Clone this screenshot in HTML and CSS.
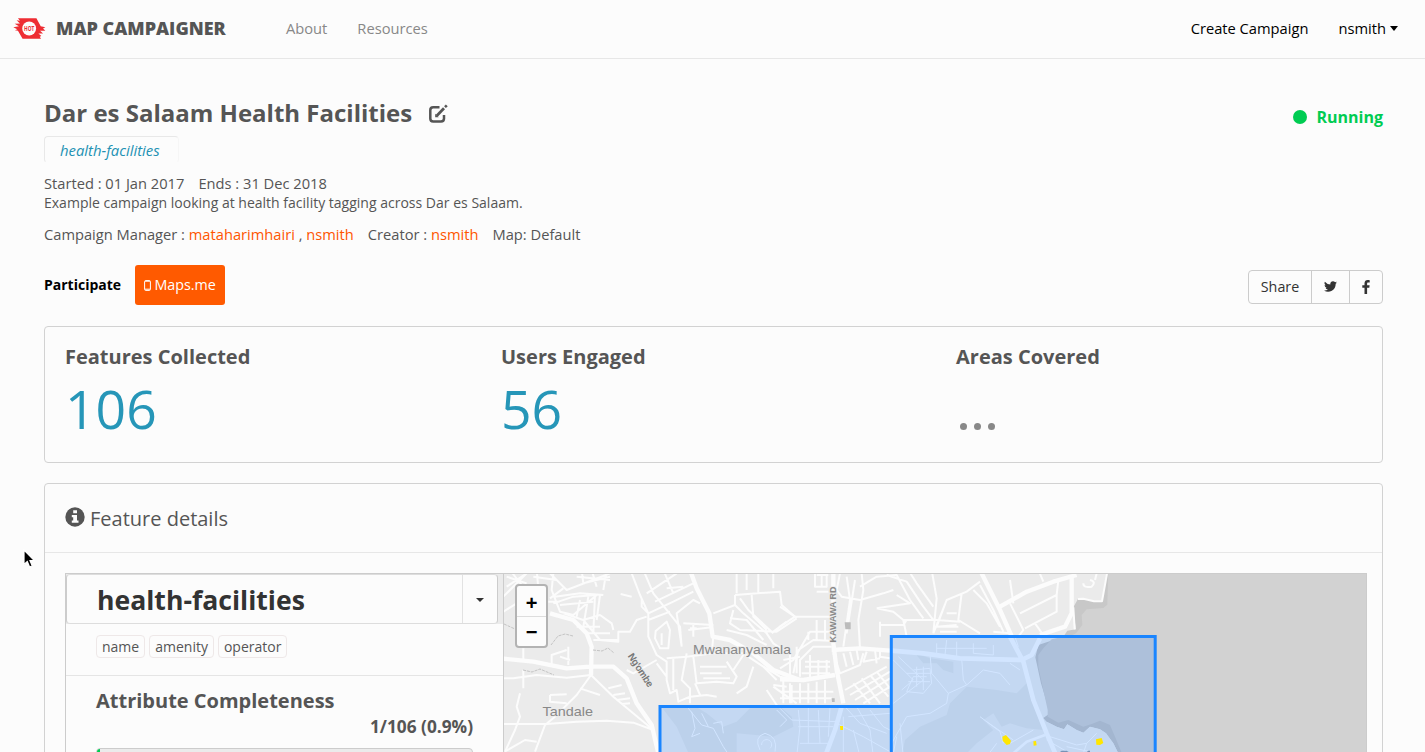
FILE: index.html
```html
<!DOCTYPE html>
<html lang="en">
<head>
<meta charset="utf-8">
<title>Map Campaigner</title>
<link rel="stylesheet" href="styles.css">
</head>
<body>
<header class="navbar">
  <svg class="logo" viewBox="0 0 100 62" width="33" height="21" preserveAspectRatio="none"><path fill="#ee2d33" d="M15 1H71L84 24 98 27 91 31 98 38 82 38 91 46 77 46 86 53 81 55 85 61H29L15 38 6 36 13 33 1 27 18 24 5 17 21 16 11 7 21 8Z"/><circle cx="49" cy="31" r="21" fill="#fcfcfc"/><text x="49" y="38" class="logo-text" text-anchor="middle" textLength="31" lengthAdjust="spacingAndGlyphs">HOT</text></svg>
  <span class="brand">MAP CAMPAIGNER</span>
  <nav class="links"><a>About</a><a>Resources</a></nav>
  <nav class="account"><a>Create Campaign</a><a class="user">nsmith<i class="caret"></i></a></nav>
</header>
<main class="page">
  <div class="title-row">
    <h1>Dar es Salaam Health Facilities</h1>
    <svg class="edit" viewBox="0 0 20 20" width="20" height="20" fill="none" stroke="#555"><path stroke-width="2.5" d="M11.5 3.3H5.2Q2.3 3.3 2.3 6.2V14.5Q2.3 17.5 5.2 17.5H13Q16 17.5 16 14.5V11"/><path stroke-width="2.7" d="M8.8 11.8 16 4.2"/><path stroke-width="2.6" d="M17 3.2 18.8 1.4"/><path fill="#555" stroke="none" d="M7.2 13.2V9.8L10.7 13.2Z"/></svg>
    <div class="status"><i class="dot"></i>Running</div>
  </div>
  <div class="type-tag">health-facilities</div>
  <p class="meta dates"><span>Started : 01 Jan 2017</span><span>Ends : 31 Dec 2018</span></p>
  <p class="meta desc">Example campaign looking at health facility tagging across Dar es Salaam.</p>
  <p class="meta people"><span>Campaign Manager : <a>mataharimhairi</a> , <a>nsmith</a></span><span>Creator : <a>nsmith</a></span><span>Map: Default</span></p>
  <div class="actions">
    <b class="participate">Participate</b>
    <a class="mapsme"><svg viewBox="0 0 7 11" width="7" height="11"><rect x=".6" y=".6" width="5.8" height="9.8" rx="1" fill="none" stroke="#fff"/><path d="M1 1.2H6M1 9.2H6" stroke="#fff"/></svg>Maps.me</a>
    <div class="share">
      <span class="share-label">Share</span>
      <span class="share-tw"><svg viewBox="0 0 24 24" width="13" height="13"><path fill="#333" d="M24 4.6a10 10 0 0 1-2.8.8 5 5 0 0 0 2.1-2.7 10 10 0 0 1-3.1 1.2 4.9 4.9 0 0 0-8.4 4.5A14 14 0 0 1 1.700 3.200a4.900 4.900 0 0 0 1.500 6.500 5 5 0 0 1-2.200-.6 4.900 4.900 0 0 0 3.900 4.900 5 5 0 0 1-2.200.1 4.900 4.900 0 0 0 4.600 3.400A9.900 9.900 0 0 1 0 19.500 14 14 0 0 0 21.500 7.100 10 10 0 0 0 24 4.600Z"/></svg></span>
      <span class="share-fb"><svg viewBox="0 0 8 14" width="8" height="14"><path fill="#333" d="M7.700.2V2.500H6.300C5.300 2.500 5.100 3 5.100 3.700V5.200H7.600L7.300 7.700H5.100V14H2.500V7.700H.3V5.200H2.500V3.300C2.500 1.200 3.800 0 5.700 0 6.700 0 7.400.1 7.700.2Z"/></svg></span>
    </div>
  </div>
  <section class="card stats">
    <div class="stat"><h2>Features Collected</h2><div class="num">106</div></div>
    <div class="stat"><h2>Users Engaged</h2><div class="num">56</div></div>
    <div class="stat"><h2>Areas Covered</h2><div class="dots"><i></i><i></i><i></i></div></div>
  </section>
  <section class="card details">
    <div class="card-head"><svg viewBox="0 0 20 20" width="20" height="20"><circle cx="10" cy="10" r="9.700" fill="#555"/><path fill="#fcfcfc" d="M8.200 3.200H12V6.200H8.200ZM6.800 8H12V13.400H13.500V15.800H6.800V13.400H8.200V10.300H6.800Z"/></svg><span>Feature details</span></div>
    <div class="explorer">
      <div class="side">
        <div class="select-row"><div class="select"><span class="value">health-facilities</span><span class="toggle"><i class="caret small"></i></span></div></div>
        <div class="attrs"><span>name</span><span>amenity</span><span>operator</span></div>
        <div class="complete"><h2>Attribute Completeness</h2><div class="pct">1/106 (0.9%)</div><div class="bar"><i style="width:0.9%"></i></div></div>
      </div>
      <div class="map">
        <svg class="tiles" viewBox="504 574 862 179" width="862" height="179">
          <defs>
            <clipPath id="areas"><path d="M660 706.500H891.300V636.500H1155V780H660Z"/></clipPath>
            <path id="shore" d="M983 0 974 50 966 94 942 94 910 86 894 87 880 112 884 150 888 178 862 182 850 200 775 225 766 262 783 340 810 430 790 444 800 455 830 470 852 478 862 463 890 480 910 488 930 470 960 478 978 490 1000 520 1020 560H1920V0Z"/>
          </defs>
          <rect x="504" y="573" width="863" height="190" fill="#ebebeb"/>
          <g transform="translate(780 570) scale(.33333)"><use href="#shore" fill="#c8c8c8"/><path fill="#d2d2d2" d="M985 0 982 104 970 114 920 118 905 135 907 165 888 190 850 208V560H1920V0Z"/></g>
          <g class="roads" transform="translate(500 570) scale(.33333)">
            <path class="wide" d="M570 0 590 55 628 130 638 200 690 210 760 250 820 300 900 330M0 265 100 275 200 295 270 290 340 290 380 325 410 400 455 465 475 550M150 130 220 150 260 190 275 230 273 315"/>
            <path class="mid" d="M0 325 40 325 110 315 200 323 273 315 340 380 460 480M0 462 140 462 230 455 320 452 400 458 460 480M273 315 230 375 165 440 135 465 105 545M14 545 75 510 110 515M70 300V355M60 370 50 410 60 440 45 480 15 545M150 375 200 373M150 375V395L200 400M240 355 300 375M325 355 365 345M340 375 375 370M350 390 390 385M365 402 390 400"/>
            <path class="mid" d="M395 10 420 75 445 130 445 200 470 255 500 275 500 330 510 370 530 360 535 395 570 380 620 375 650 380M430 0 460 70 500 120 540 170 545 230M490 0 520 70M440 70 530 10M465 95 580 40M445 130 520 95 580 65M445 150 510 125M500 55 550 50M395 80 362 72M425 85V110L445 130M545 230 530 130 580 90 600 100M550 160 640 165M565 180 635 172M470 270 400 310 380 300M500 265 560 260 640 250 730 250 790 290 830 330M470 280 500 320M580 260 590 340 650 335 700 340 710 320 680 275M600 290H680M600 310H665M610 325H690M585 340 600 375M520 265V360M560 250 545 330 570 355V400"/>
            <path class="mid" d="M710 0V70M740 0V60M775 0V70M820 0V55M705 75 840 65 845 105 890 145M705 75V105L640 130M705 105 730 130 800 190 820 220 850 240M720 85 745 120 820 190M755 75 760 140 800 180M700 120 690 160 720 180 830 185 890 145M690 145 740 150 790 210M680 180 740 195 800 225M820 185 860 155M730 255 700 300M760 290 740 350 710 370M790 290 840 320 890 330M800 360 840 420M820 350 890 400M850 330V385M820 345 860 350M870 340V400M850 270 900 260M870 240V330M890 230V310M640 200 635 250"/>
            <path class="mid" d="M160 10 155 60 180 125 220 135 290 75 220 80 160 100M165 80 240 70 310 75M180 105 280 95M190 130 250 150 300 210 355 215V185L390 185 410 150 440 140M240 90 230 140M265 80 250 170M285 75 280 190M300 75 290 150M250 150 300 135 335 160 340 180M230 170H300M260 190H330M280 210H355M320 0 310 60M245 0 250 40M275 0 290 50M230 20 330 30M250 40 330 20M150 10 200 60 330 10M100 20 170 30M60 30 90 0M20 50 80 10M10 80 60 30M10 125 50 100M20 20 80 40M30 0 65 45M110 0 115 55M145 95H180M150 85 190 55M200 240 155 255V290M205 230V285M180 260 210 270M70 235V275"/>
            <path d="M467 183 500 155 510 180 505 235 480 235 465 205ZM485 190V225M580 165V200M590 175H570"/>
          </g>
          <g class="roads" transform="translate(780 570) scale(.33333)">
            <path class="wide" d="M160 0V220L170 300 190 400M0 328 70 330 165 315M600 0 630 60 660 120 700 210M660 110 740 65 820 35 890 15M875 15V130L855 170 780 195M155 240 240 235 330 242"/>
            <path class="mid" d="M0 110 45 140 0 170M45 140H150M110 65H145M105 0V50H140V10M110 15H145M125 0V50M180 10 170 60 185 80 240 90 310 70 340 60M245 10 250 60 235 150 240 235M200 20 210 90 190 230M225 30 200 190M240 50 290 20 350 15 390 90 430 145M320 15 380 35 430 110 460 150M385 0 410 40 460 110M455 0 470 85 460 190M600 35 560 65 500 90 470 170 530 165M500 90 460 190M545 70 535 150 600 190M600 45 640 120 670 185M580 60 620 100 660 170M290 115 340 125 370 150 470 150 540 155M290 115 390 100 350 75M300 155V200M300 165 370 165 380 150M470 170H535M480 185H530M500 130H530M370 150 380 200 360 220M690 100 730 180 715 200M720 130 830 75 835 30M735 175 830 125 830 75M765 160 790 195M775 0 790 35M690 30 700 100M640 185 690 190M910 40Q910 55 935 50 950 35 930 30M925 0 950 10 945 30"/>
            <path class="mid" d="M0 295 40 270 90 185 150 185M40 310 55 240 100 210 150 212M60 320V270L100 230H155M75 275H150M75 290H150M65 310H150M90 255V325M115 270V325M140 270V320M85 185V210M110 150V210M135 150V210M190 250 200 290M210 245 220 285M230 240 235 270M160 250 180 310 240 285 250 250M260 245 250 275 300 265M285 240 290 280M300 240V260L330 265M10 345V400M35 345V400M60 340V400M85 340V400M110 335V400M135 330V400M0 365H160M0 385H155M195 360 320 290M210 375 330 305M225 390 330 325M250 400 330 350M220 340 270 400M245 325 300 400M270 315 325 380M290 305 330 355"/>
            <path d="M894 87 910 86 942 94 966 94 974 50 983 0M880 112 884 178"/>
          </g>
          <path class="streams" d="M504 624 515 629M551 645 558 636 565 634 573 636M593 650 602 651 608 648 614 653M523 670 532 672 540 669 554 675"/>
          <g clip-path="url(#areas)">
            <path fill="#c4d8f2" d="M660 706H891V636H1155V760H660Z"/>
            <g transform="translate(780 570) scale(.33333)">
              <path fill="#bcd1eb" d="M-360 405-310 470-270 560-130 560-130 490-20 500 40 470 35 440 0 410-90 415-130 455-170 470-220 430-270 400ZM365 560 375 510 420 470 500 435 510 400 560 350 650 360 710 370 740 340 790 480 740 475 690 460 665 470 640 430 610 450 640 480 590 520 550 560ZM405 250 450 265 520 275 520 310 490 300 470 280 430 280Z"/>
              <use href="#shore" fill="#a3b6d0"/>
              <path fill="#adc0da" d="M790 235 815 208 850 200 1200 190V560H1030L1005 500 990 465 960 452 935 462 910 470 865 450 835 458 803 440 803 420 775 290 775 255Z"/>
              <path fill="#c4d8f2" d="M800 455 830 470 852 478 862 463 890 480 910 488 930 470 960 478 978 490 1000 520 1020 560H800Z"/>
              <g class="area-roads">
                <path class="wide" d="M690 200 730 275 760 390 800 490 830 560M334 242 430 250 540 265 725 270 755 255 780 205M185 410 165 480 135 560"/>
                <path class="wide small" d="M700 550 740 515 795 495"/>
                <path d="M340 270 400 330 365 360M355 260 430 330 340 400M450 250 455 310 505 370 500 400 450 430 380 440 335 520M545 265 550 330 560 345 610 300 660 310 690 345M505 370 560 345M400 300 450 295 455 340 430 370 380 365 400 320 440 320M410 290V350M430 290V360M380 310H455M385 335H450M470 220V250M500 210 495 255M530 215V265M470 235H620M580 220V250L640 255V225M600 440 660 485 670 520M620 455 700 510M810 500 890 525 920 520 950 490M920 520 910 550M800 510 870 550M650 520 620 560M690 520 760 480M860 530 930 545M360 460 370 560M350 500 340 550M690 280 720 300M705 200 715 230"/>
                <path d="M0 415 35 450 170 455M55 420 60 470 50 560M85 410V520M115 420 120 520M150 415 145 500M55 470 160 470M60 520H150M195 410 240 460 320 490M170 460 250 500 330 545M205 440 330 430M230 410 270 480 280 560M270 420 310 470 330 480M190 440V560M220 480 240 560"/>
                <path d="M-275 415-235 465-200 475-170 530-150 560M-265 425-255 475-265 500-240 490M-235 430-215 470M-200 460-175 455-170 490M-10 420 20 450 0 470M-60 540Q-80 500-45 490-5 500-15 545M-55 525A15 15 0 1 1-30 535"/>
              </g>
            </g>
          </g>
          <g fill="none" stroke="#1a85ff" stroke-width="3"><path d="M891 706.500H660V770"/><path d="M891.300 770V636.500H1155.200V770"/></g>
          <g transform="translate(780 570) scale(.33333)" fill="#ffe600"><path d="M667 500 678 495 693 512 690 522 680 525 668 512ZM760 514 768 513 770 526 761 527ZM948 508 965 504 970 519 960 525 949 524ZM180 468H189V480H181Z"/><path fill="#7793b6" d="M840 546 845 542H860L866 546ZM920 546 925 542H930V546Z"/><path fill="#bbb" d="M194 157H212V178H196ZM155 385H164V396H156Z"/></g>
          <g class="places"><text x="693" y="654" textLength="98" lengthAdjust="spacingAndGlyphs">Mwananyamala</text><text x="542.500" y="716" textLength="50.500" lengthAdjust="spacingAndGlyphs">Tandale</text><text class="minor" transform="translate(627.500 656) rotate(57)" textLength="38">Ng'ombe</text><text class="road-name" transform="translate(836 642.500) rotate(-90)" textLength="56">KAWAWA RD</text></g>
        </svg>
        <div class="zoom"><span>+</span><span>−</span></div>
      </div>
    </div>
  </section>
</main>
<svg class="cursor" viewBox="0 0 13 20" width="13" height="20"><path d="M1 1V15.500L4.300 12.500 6.600 18 9.300 16.900 7 11.600H11.400Z" fill="#000" stroke="#fff" stroke-width="1.200"/></svg>
</body>
</html>
```
FILE: styles.css
```css
* { box-sizing: border-box; }
body { margin: 0; height: 752px; overflow: hidden; background: #fcfcfc; color: #555; font: 14.700px/20px "Open Sans", sans-serif; }
h1, h2, p { margin: 0; }
i { display: block; }

.navbar { display: flex; align-items: center; height: 59px; padding: 0 27px 2px 13px; border-bottom: 1px solid #e7e7e7; }
.logo-text { font: 700 19px "Open Sans", sans-serif; fill: #ee2d33; }
.brand { margin-left: 10px; width: 230px; font-size: 18px; font-weight: 800; }
.links, .account { display: flex; gap: 30px; color: #888; }
.account { margin-left: auto; color: #000; }
.user { display: flex; align-items: center; gap: 4px; }
.caret { border: 4.500px solid transparent; border-top: 5px solid currentColor; border-bottom: 0; }
.caret.small { border-width: 4px 4px 0; color: #333; }

.page { height: 693px; overflow: hidden; padding: 38px 42px 0 44px; }
.title-row { display: flex; align-items: center; height: 34px; }
h1 { font-size: 24px; font-weight: 700; line-height: 32px; margin-top: -2px; }
.edit { margin-left: 16px; }
.status { display: flex; align-items: center; gap: 9px; margin-left: auto; padding-top: 5px; font-size: 16px; font-weight: 700; color: #00cc52; }
.dot { width: 14px; height: 14px; border-radius: 50%; background: #00cc52; }
.type-tag { width: 135px; height: 27px; margin-top: 5px; padding-left: 15px; border: 1px solid #e8e8e8; border-right-color: #f6f6f6; border-bottom-color: transparent; border-radius: 4px; font-size: 14.850px; font-style: italic; line-height: 26px; color: #2291b3; }
.meta { display: flex; gap: 14px; font-size: 14.680px; white-space: pre; }
.meta a { color: #ff5500; }
.dates { margin-top: 10px; }
.desc { font-size: 14.030px; }
.people { margin-top: 11px; }
.actions { display: flex; align-items: center; height: 40px; margin-top: 21px; }
.participate { color: #000; font-size: 14px; }
.mapsme { display: flex; align-items: center; justify-content: center; gap: 3px; width: 90px; height: 40px; margin-left: 14px; border-radius: 3px; background: #ff5a00; color: #fff; font-size: 14.300px; }
.share { display: flex; width: 135px; height: 34px; margin: 3px 0 0 auto; border: 1px solid #ccc; border-radius: 4px; color: #333; font-size: 14.300px; }
.share span { display: flex; align-items: center; justify-content: center; }
.share-label { width: 62px; }
.share-tw { width: 39px; border: solid #ccc; border-width: 0 1px; }
.share-fb { width: 32px; }

.card { border: 1px solid #d2d2d2; border-radius: 4px; }
.stats { display: grid; grid-template-columns: 436px 455px 1fr; height: 137px; margin-top: 21px; padding: 16px 0 0 20px; }
h2 { font-size: 20px; font-weight: 700; line-height: 28px; }
.num { font-size: 53.500px; line-height: 60px; margin-top: 8px; color: #2696b8; }
.dots { display: flex; gap: 7px; padding: 52px 0 0 4px; }
.dots i { width: 7px; height: 7px; border-radius: 50%; background: #888; }
.details { height: 400px; margin-top: 20px; }
.card-head { display: flex; align-items: center; gap: 5px; height: 69px; padding: 0 20px; border-bottom: 1px solid #e7e7e7; font-size: 20px; }
.card-head svg { margin-top: -3px; }
.card-head span { padding-top: 2px; }
.explorer { display: flex; width: 1302px; height: 300px; margin: 20px 0 0 20px; border: 1px solid #ccc; }
.side { width: 438px; border-right: 1px solid #ccc; flex: none; }
.select-row { height: 50px; background: #ebebeb; }
.select { display: flex; width: 432px; height: 50px; border: 1px solid #ccc; border-top-color: #ddd; border-bottom-color: #ddd; border-radius: 4px; background: #fcfcfc; }
.value { flex: 1; padding-left: 30px; font-size: 26.600px; font-weight: 700; line-height: 50px; color: #333; }
.toggle { display: flex; align-items: center; justify-content: center; width: 35px; padding-top: 2px; border-left: 1px solid #e2e2e2; }
.attrs { display: flex; gap: 4px; height: 52px; padding: 11px 30px 0; border-bottom: 1px solid #e5e5e5; }
.attrs span { height: 23px; padding: 0 5px; border: 1px solid #eee8e8; border-radius: 4px; font-size: 14px; line-height: 21px; }
.complete { padding: 11px 30px 0; }
.pct { font-size: 17.300px; font-weight: 700; line-height: 24px; text-align: right; }
.bar { height: 20px; margin-top: 9px; overflow: hidden; border: 1px solid #ccc; border-radius: 4px; background: #ebebeb; }
.bar i { height: 20px; background: #00cc52; }

.map { position: relative; width: 862px; height: 179px; overflow: hidden; }
.tiles { display: block; }
.roads path { fill: none; stroke: #fcfcfc; stroke-width: 6; stroke-linejoin: round; }
.roads .wide { stroke-width: 13; }
.area-roads path { fill: none; stroke: #d2e5ff; stroke-width: 3; stroke-linejoin: round; }
.area-roads .wide { stroke-width: 14; }
.area-roads .small { stroke-width: 8; }
.streams { fill: none; stroke: #c4c4c4; stroke-width: 1; stroke-dasharray: 3 1; }
.places text { font: 13.500px "Liberation Sans", Arial, sans-serif; fill: #888; stroke: #ebebeb; stroke-width: 1.500; paint-order: stroke; }
.places .minor { font-size: 10px; font-weight: 700; fill: #777; }
.places .road-name { font-size: 9px; font-weight: 700; fill: #888; }
.zoom { position: absolute; top: 10px; left: 11px; width: 33px; height: 64px; border: 2px solid #b3b3b3; border-radius: 4px; background: #fcfcfc; color: #000; }
.zoom span { display: block; height: 30px; font: 700 20px/34px "Liberation Sans", Arial, sans-serif; text-align: center; }
.zoom span + span { border-top: 1px solid #ddd; line-height: 30px; }
.cursor { position: absolute; left: 23px; top: 549px; }
```
